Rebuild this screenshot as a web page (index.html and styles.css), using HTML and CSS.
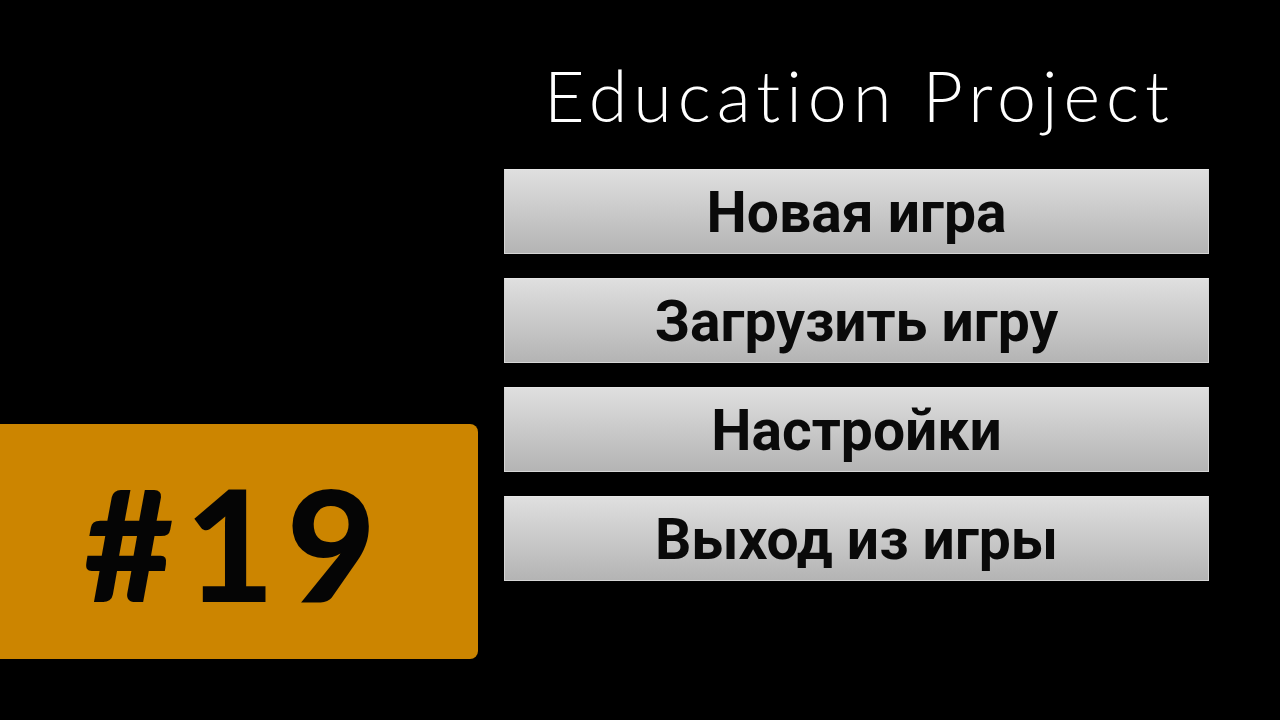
FILE: index.html
```html
<!DOCTYPE html>
<html lang="ru">
<head>
<meta charset="utf-8">
<title>Education Project #19</title>
<link rel="stylesheet" href="styles.css">
</head>
<body>
<div class="page">
  <div class="side">
    <div class="badge"><span class="badge-text">#19</span></div>
  </div>
  <div class="menu">
    <h1 class="title">Education Project</h1>
    <div class="buttons">
      <div class="btn">Новая игра</div>
      <div class="btn">Загрузить игру</div>
      <div class="btn">Настройки</div>
      <div class="btn">Выход из игры</div>
    </div>
  </div>
</div>
</body>
</html>
```

FILE: styles.css
```css
html, body {
  margin: 0;
  padding: 0;
  background: #000;
}
.page {
  width: 1280px;
  height: 720px;
  display: grid;
  grid-template-columns: 478px 1fr;
  overflow: hidden;
}
.side {
  display: flex;
  flex-direction: column;
}
.badge {
  margin-top: 424px;
  height: 235px;
  background: #cc8500;
  border-radius: 0 8px 8px 0;
  display: flex;
  align-items: center;
  justify-content: center;
}
.badge-text {
  font-family: Lato, "DejaVu Sans", sans-serif;
  font-weight: 900;
  font-size: 154px;
  line-height: 1;
  color: #050505;
  letter-spacing: 12px;
  margin-right: 6px;
  margin-top: 2px;
}
.menu {
  padding-left: 26px;
  width: 705px;
  display: flex;
  flex-direction: column;
}
.title {
  margin: 60px 0 0 0;
  height: 70px;
  font-family: Lato, "DejaVu Sans", sans-serif;
  font-weight: 300;
  font-size: 70px;
  line-height: 70px;
  color: #fff;
  text-align: center;
  white-space: nowrap;
  letter-spacing: 6px;
  text-indent: 6px;
}
.buttons {
  margin-top: 39px;
  display: flex;
  flex-direction: column;
  gap: 24px;
}
.btn {
  box-sizing: border-box;
  height: 85px;
  border: 1px solid #d6d6d6;
  border-top-color: #e6e6e6;
  background: linear-gradient(#dfdfdf, #b4b4b4);
  display: flex;
  align-items: center;
  justify-content: center;
  padding-top: 2px;
  font-family: Roboto, "Liberation Sans", sans-serif;
  font-weight: 700;
  font-size: 57px;
  color: #0a0a0a;
  white-space: nowrap;
}
```
